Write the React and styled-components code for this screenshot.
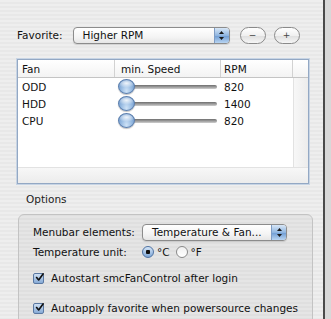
import React from 'react'
import styled, { createGlobalStyle } from 'styled-components'

const GlobalStyle = createGlobalStyle`
  html, body {
    margin: 0;
    padding: 0;
    background: #d8d8d8;
  }
  body {
    font-family: "DejaVu Sans", "Lucida Grande", sans-serif;
    font-size: 10.5px;
    color: #111;
  }
`

const fans = [
  { name: 'ODD', rpm: 820 },
  { name: 'HDD', rpm: 1400 },
  { name: 'CPU', rpm: 820 },
]

export default function App() {
  return (
    <>
      <GlobalStyle />
      <Window>
        <FavoriteRow>
          <Label>Favorite:</Label>
          <Popup width='157px'>
            <PopupText>Higher RPM</PopupText>
            <Stepper><Arrows /></Stepper>
          </Popup>
          <RoundButton>&minus;</RoundButton>
          <RoundButton>+</RoundButton>
        </FavoriteRow>

        <Table>
          <HeaderRow>
            <HeaderCell pad='4px'>Fan</HeaderCell>
            <HeaderCell pad='6px'>min. Speed</HeaderCell>
            <HeaderCell pad='3px'>RPM</HeaderCell>
            <HeaderCell />
          </HeaderRow>
          <TableBody>
            <Rows>
              {fans.map((fan) => (
                <Row key={fan.name}>
                  <Cell pad='4px'>{fan.name}</Cell>
                  <Cell pad='10px'>
                    <Slider>
                      <Track />
                      <Knob />
                    </Slider>
                  </Cell>
                  <Cell pad='3px'>{fan.rpm}</Cell>
                </Row>
              ))}
            </Rows>
            <RightGutter />
          </TableBody>
          <BottomGutter />
        </Table>

        <GroupTitle>Options</GroupTitle>
        <GroupBox>
          <OptionRow>
            <OptionLabel>Menubar elements:</OptionLabel>
            <Popup width='145px'>
              <PopupText>Temperature &amp; Fan...</PopupText>
              <Stepper><Arrows /></Stepper>
            </Popup>
          </OptionRow>
          <OptionRow>
            <OptionLabel>Temperature unit:</OptionLabel>
            <RadioGroup>
              <Radio checked />
              <span>°C</span>
              <Radio />
              <span>°F</span>
            </RadioGroup>
          </OptionRow>
          <CheckRow>
            <Checkbox><CheckMark /></Checkbox>
            <span>Autostart smcFanControl after login</span>
          </CheckRow>
          <CheckRow>
            <Checkbox><CheckMark /></Checkbox>
            <span>Autoapply favorite when powersource changes</span>
          </CheckRow>
        </GroupBox>
      </Window>
    </>
  )
}

const Arrows = () => (
  <svg width="7" height="11" viewBox="0 0 7 11">
    <path d="M3.5 1 L6 4 L1 4 Z" fill="#1a1a1a" />
    <path d="M3.5 10 L6 7 L1 7 Z" fill="#1a1a1a" />
  </svg>
)

const CheckMark = () => (
  <svg width="11" height="11" viewBox="0 0 11 11">
    <path d="M2 5.5 L4.5 8.5 L10 1" stroke="#111" strokeWidth="2" fill="none" strokeLinecap="round" strokeLinejoin="round" />
  </svg>
)

const Window = styled.div`
  width: 325px;
  height: 319px;
  box-sizing: border-box;
  overflow: hidden;
  padding: 26px 0 0 17px;
  border-right: 2px solid #4a4a4a;
  background: repeating-linear-gradient(#eeeeee 0 2px, #e8e8e8 2px 4px);
`

const FavoriteRow = styled.div`
  display: flex;
  align-items: center;
  height: 18px;
`

const Label = styled.span`
  margin-right: 10px;
`

const Popup = styled.div`
  width: ${props => props.width};
  height: 17px;
  box-sizing: border-box;
  display: flex;
  align-items: center;
  border: 1px solid #8c8c8c;
  border-radius: 4px;
  background: linear-gradient(#ffffff, #f4f4f4 60%, #e6e6e6);
  overflow: hidden;
  box-shadow: 0 1px 1px rgba(0,0,0,0.12);
`

const PopupText = styled.span`
  flex: 1;
  padding-left: 9px;
  white-space: nowrap;
  overflow: hidden;
`

const Stepper = styled.div`
  width: 14px;
  height: 100%;
  display: flex;
  align-items: center;
  justify-content: center;
  background: linear-gradient(#d8e7f7, #8fb5e0 50%, #6c9ad2 51%, #b9d5f2);
  border-left: 1px solid #7e9cc4;
`

const RoundButton = styled.div`
  width: 26px;
  height: 17px;
  box-sizing: border-box;
  margin-left: 10px;
  border: 1px solid #8a8a8a;
  border-radius: 9px;
  background: linear-gradient(#ffffff, #f0f0f0 50%, #dedede 51%, #f6f6f6);
  display: flex;
  align-items: center;
  justify-content: center;
  font-size: 9px;
  color: #444;
  & + & {
    margin-left: 8px;
  }
`

const Table = styled.div`
  margin-top: 15px;
  width: 292px;
  height: 125px;
  box-sizing: border-box;
  border: 1px solid #93a8c4;
  box-shadow: 0 0 0 1px #c7d4e4;
  display: flex;
  flex-direction: column;
  background: #f2f2f2;
`

const HeaderRow = styled.div`
  display: grid;
  grid-template-columns: 97px 106px 72px 1fr;
  height: 18px;
  box-sizing: border-box;
  border-bottom: 1px solid #c4c4c4;
  background: linear-gradient(#ffffff, #f3f3f3);
`

const HeaderCell = styled.div`
  display: flex;
  align-items: center;
  padding-left: ${props => props.pad || '0'};
  border-right: 1px solid #d2d2d2;
  &:last-child {
    border-right: none;
  }
`

const TableBody = styled.div`
  flex: 1;
  display: flex;
`

const Rows = styled.div`
  width: 275px;
  background: #ffffff;
`

const RightGutter = styled.div`
  flex: 1;
  border-left: 1px solid #e2e2e2;
  background: linear-gradient(90deg, #f7f7f7, #ececec);
`

const BottomGutter = styled.div`
  height: 15px;
  border-top: 1px solid #e2e2e2;
  background: linear-gradient(#f7f7f7, #ececec);
`

const Row = styled.div`
  display: grid;
  grid-template-columns: 97px 106px 72px;
  height: 17px;
  align-items: center;
`

const Cell = styled.div`
  padding-left: ${props => props.pad};
  display: flex;
  align-items: center;
`

const Slider = styled.div`
  position: relative;
  width: 92px;
  height: 17px;
  display: flex;
  align-items: center;
`

const Track = styled.div`
  width: 100%;
  height: 4px;
  border-radius: 2px;
  background: linear-gradient(#6e6e6e, #a6a6a6 60%, #d0d0d0);
`

const Knob = styled.div`
  position: absolute;
  left: -7px;
  top: 1px;
  width: 17px;
  height: 15px;
  box-sizing: border-box;
  border-radius: 50%;
  border: 1px solid #5c7fae;
  background: radial-gradient(ellipse 60% 35% at 50% 25%, rgba(255,255,255,0.85), rgba(255,255,255,0) 100%),
    radial-gradient(ellipse at 50% 85%, #cfe3f7 0%, #9dbfe4 45%, #7aa2d2 80%);
  box-shadow: 0 1px 1px rgba(0,0,0,0.25);
`

const GroupTitle = styled.div`
  margin: 9px 0 0 9px;
  height: 13px;
  line-height: 13px;
  color: #222;
`

const GroupBox = styled.div`
  margin-top: 8px;
  margin-left: 1px;
  width: 295px;
  height: 140px;
  box-sizing: border-box;
  border: 1px solid #c3c3c3;
  border-radius: 6px;
  background: rgba(0,0,0,0.035);
  padding: 8px 0 0 14px;
`

const OptionRow = styled.div`
  display: flex;
  align-items: center;
  height: 18px;
  & + & {
    margin-top: 2px;
  }
`

const OptionLabel = styled.span`
  width: 109px;
  white-space: nowrap;
`

const RadioGroup = styled.div`
  display: flex;
  align-items: center;
  gap: 3px;
  & > span {
    margin-right: 3px;
  }
`

const Radio = styled.div`
  width: 12px;
  height: 12px;
  box-sizing: border-box;
  border-radius: 50%;
  border: 1px solid ${props => props.checked ? '#4f73a3' : '#8a8a8a'};
  background: ${props => props.checked
    ? 'radial-gradient(circle, #111 0 2px, transparent 2.5px), linear-gradient(#d6e6f7, #7ea6d6)'
    : 'linear-gradient(#f0f0f0, #ffffff)'};
`

const CheckRow = styled.div`
  display: flex;
  align-items: center;
  height: 16px;
  margin-top: 9px;
  & + & {
    margin-top: 14px;
  }
  & > span {
    margin-left: 7px;
    white-space: nowrap;
  }
`

const Checkbox = styled.div`
  width: 11px;
  height: 11px;
  box-sizing: border-box;
  border: 1px solid #5a78a2;
  border-radius: 2px;
  background: linear-gradient(#cfe0f3, #86aad6);
  display: flex;
  align-items: center;
  justify-content: center;
  & svg {
    margin: -2px -1px 0 1px;
  }
`
